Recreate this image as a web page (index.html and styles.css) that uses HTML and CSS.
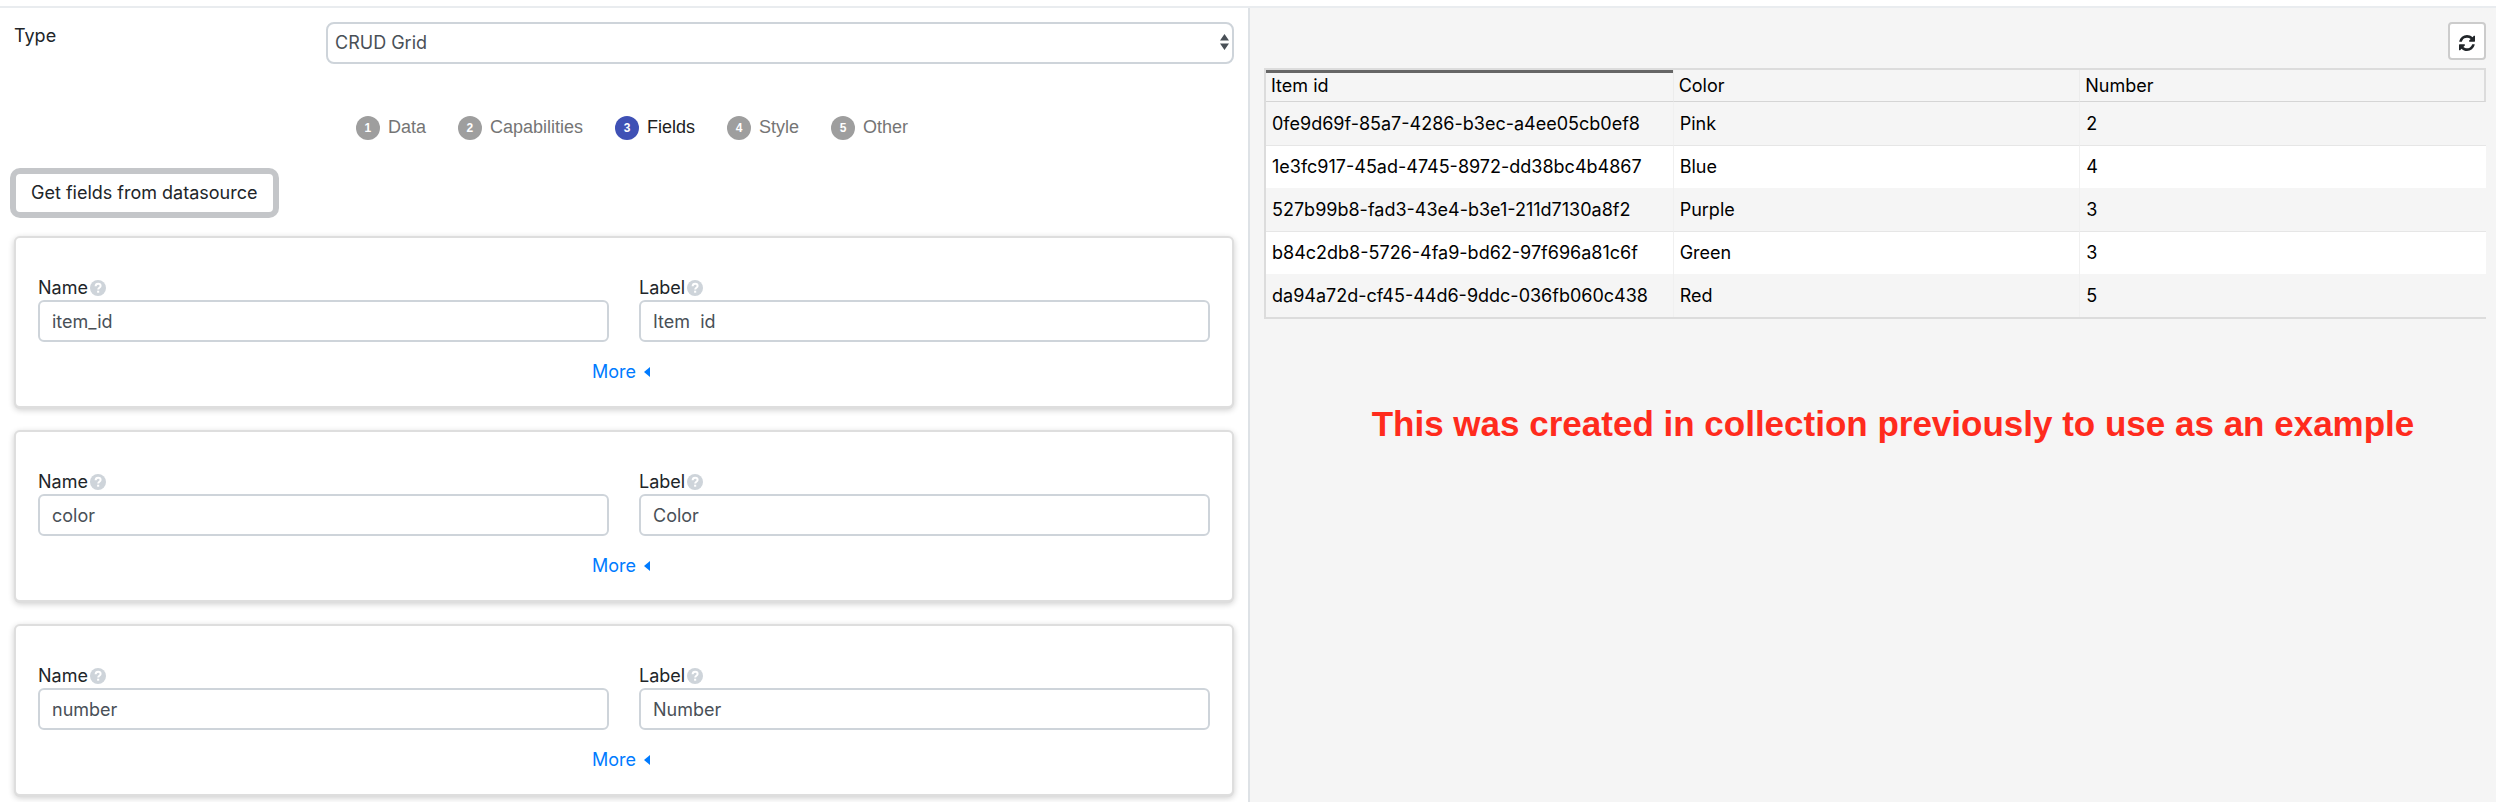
FILE: index.html
```html
<!DOCTYPE html>
<html lang="en">
<head>
<meta charset="utf-8">
<title>CRUD Grid settings</title>
<link rel="stylesheet" href="styles.css">
</head>
<body>
<svg class="defs" aria-hidden="true">
  <symbol id="help" viewBox="0 0 16 16"><circle cx="8" cy="8" r="8" fill="#ced4da"/><path d="M5.600 6.200C5.700 4.500 6.700 3.700 8.100 3.700c1.500 0 2.500.900 2.500 2.200 0 1.800-2.400 1.800-2.400 3.500" fill="none" stroke="#fff" stroke-width="2"/><path d="M7.100 10.700h2.100v2h-2.100z" fill="#fff"/></symbol>
</svg>
<div class="app">
  <main class="editor">
    <div class="type-row">
      <label class="type-label" for="type">Type</label>
      <div class="select-wrap">
        <select id="type" class="control select"><option>CRUD Grid</option></select>
        <svg class="select-arrow" viewBox="0 0 9 16" aria-hidden="true"><path d="M0 6.500 4.500 0 9 6.500zM0 9.500 4.500 16 9 9.500z" fill="#495057"/></svg>
      </div>
    </div>
    <nav class="steps">
      <button class="step"><span class="dot">1</span>Data</button>
      <button class="step"><span class="dot">2</span>Capabilities</button>
      <button class="step active"><span class="dot">3</span>Fields</button>
      <button class="step"><span class="dot">4</span>Style</button>
      <button class="step"><span class="dot">5</span>Other</button>
    </nav>
    <button class="fetch">Get fields from datasource</button>
    <div class="cards">
      <section class="card">
        <div class="fields">
          <div><label class="field-label" for="n1">Name<svg class="help"><use href="#help"/></svg></label><input class="control" id="n1" type="text" value="item_id"></div>
          <div><label class="field-label" for="l1">Label<svg class="help"><use href="#help"/></svg></label><input class="control" id="l1" type="text" value="Item  id"></div>
        </div>
        <a class="more" href="#">More<svg class="caret" viewBox="0 0 6 10"><path d="M6 0v10L0 5z" fill="currentColor"/></svg></a>
      </section>
      <section class="card">
        <div class="fields">
          <div><label class="field-label" for="n2">Name<svg class="help"><use href="#help"/></svg></label><input class="control" id="n2" type="text" value="color"></div>
          <div><label class="field-label" for="l2">Label<svg class="help"><use href="#help"/></svg></label><input class="control" id="l2" type="text" value="Color"></div>
        </div>
        <a class="more" href="#">More<svg class="caret" viewBox="0 0 6 10"><path d="M6 0v10L0 5z" fill="currentColor"/></svg></a>
      </section>
      <section class="card">
        <div class="fields">
          <div><label class="field-label" for="n3">Name<svg class="help"><use href="#help"/></svg></label><input class="control" id="n3" type="text" value="number"></div>
          <div><label class="field-label" for="l3">Label<svg class="help"><use href="#help"/></svg></label><input class="control" id="l3" type="text" value="Number"></div>
        </div>
        <a class="more" href="#">More<svg class="caret" viewBox="0 0 6 10"><path d="M6 0v10L0 5z" fill="currentColor"/></svg></a>
      </section>
    </div>
  </main>
  <aside class="preview">
    <button class="refresh" aria-label="Refresh"><svg viewBox="0 0 1536 1536"><path fill="#212529" d="M1511 928q0 5-1 7-64 268-268 434.500T764 1536q-146 0-282.500-55T238 1324l-129 129q-19 19-45 19t-45-19-19-45V960q0-26 19-45t45-19h448q26 0 45 19t19 45-19 45l-137 137q71 66 161 102t187 36q134 0 250-65t186-179q11-17 53-117 8-23 30-23h192q13 0 22.500 9.500t9.500 22.500zm25-800v448q0 26-19 45t-45 19h-448q-26 0-45-19t-19-45 19-45l138-138Q969 256 768 256q-134 0-250 65T332 500q-11 17-53 117-8 23-30 23H50q-13 0-22.500-9.500T18 608v-7q65-268 270-434.500T768 0q146 0 284 55.500T1297 212l130-129q19-19 45-19t45 19 19 45z"/></svg></button>
    <table class="grid">
      <thead><tr><th class="sorted">Item id</th><th>Color</th><th>Number</th></tr></thead>
      <tbody>
        <tr><td>0fe9d69f-85a7-4286-b3ec-a4ee05cb0ef8</td><td>Pink</td><td>2</td></tr>
        <tr><td>1e3fc917-45ad-4745-8972-dd38bc4b4867</td><td>Blue</td><td>4</td></tr>
        <tr><td>527b99b8-fad3-43e4-b3e1-211d7130a8f2</td><td>Purple</td><td>3</td></tr>
        <tr><td>b84c2db8-5726-4fa9-bd62-97f696a81c6f</td><td>Green</td><td>3</td></tr>
        <tr><td>da94a72d-cf45-44d6-9ddc-036fb060c438</td><td>Red</td><td>5</td></tr>
      </tbody>
    </table>
    <p class="note">This was created in collection previously to use as an example</p>
  </aside>
</div>
</body>
</html>
```
FILE: styles.css
```css
* { box-sizing: border-box; }
body { margin: 0; padding-top: 6px; background: #fff; color: #212529; font: 18px/24px Inter, "Liberation Sans", sans-serif; }
button, input, select { font: inherit; color: inherit; margin: 0; }
.defs { position: absolute; width: 0; height: 0; }
.app { display: grid; grid-template-columns: 1fr 1fr; min-height: calc(100vh - 6px); border-top: 2px solid #e9ecef; }
.editor { padding: 14px 14px 0; }
.type-row { display: flex; align-items: flex-start; justify-content: space-between; }
.type-label { padding-top: 2px; }
.select-wrap { position: relative; width: 908px; max-width: 75%; }
.control { display: block; width: 100%; height: 42px; padding: 0 12px; border: 2px solid #ced4da; border-radius: 6px; background: #fff; color: #495057; }
.select { appearance: none; padding: 0 7px; border-radius: 8px; }
.select-arrow { position: absolute; right: 5px; top: 12px; width: 9px; height: 16px; }
.steps { display: flex; justify-content: center; gap: 32px; margin: 52px 0 32px; padding-left: 16px; }
.step { display: flex; align-items: flex-start; gap: 8px; padding: 0; border: 0; background: none; color: #757575; font: 18px/22px "Liberation Sans", sans-serif; }
.dot { display: grid; place-items: center; width: 24px; height: 24px; border-radius: 50%; background: #9e9e9e; color: #fff; font-size: 12px; font-weight: 700; }
.active { color: #212121; }
.active .dot { background: #3f51b5; }
.fetch { display: block; height: 42px; padding: 0 15px; border: 2px solid #c4c6c9; border-radius: 6px; background: #fff; box-shadow: 0 0 0 4px #c4c6c9; }
.cards { display: grid; gap: 26px; margin-top: 24px; padding: 0 2px 8px; }
.card { display: flex; flex-direction: column; padding: 38px 22px 22px; border-radius: 4px; background: #fff; box-shadow: 0 0 0 2px #dedede, 0 1px 0 2px #dedede, 0 2px 6px 2px #0003; }
.fields { display: grid; grid-template-columns: 1fr 1fr; gap: 30px; }
.field-label { display: flex; align-items: center; }
.help { width: 16px; height: 16px; margin-left: 2px; }
.more { display: flex; align-items: center; justify-content: center; gap: 8px; margin-top: 18px; padding-right: 6px; color: #007bff; text-decoration: none; }
.caret { width: 6px; height: 10px; }
.preview { display: flex; flex-direction: column; padding: 14px 10px 0 14px; border-left: 2px solid #dee2e6; background: #f5f5f5; }
.refresh { display: grid; place-items: center; align-self: flex-end; width: 38px; height: 38px; padding: 3px 0 0; border: 2px solid #ccc; border-radius: 4px; background: #fff; }
.refresh svg { width: 16px; height: 16px; }
.grid { width: 100%; margin-top: 8px; table-layout: fixed; border-collapse: separate; border-spacing: 0; border: solid #dcdcdc; border-width: 2px 0 2px 2px; color: #000; }
.grid th { height: 32px; padding: 0 5px; border-bottom: 1px solid #d5d5d5; border-left: 1px solid #ececec; text-align: left; font-weight: 400; }
.grid th:last-child { border-right: 2px solid #dcdcdc; }
.grid .sorted { border-left: 0; box-shadow: inset 0 3px #666; }
.grid td { height: 43px; padding: 0 6px; border-left: 1px solid #f0f0f0; white-space: nowrap; }
.grid td:first-child { border-left: 0; }
.grid tbody tr:nth-child(even) { background: #fff; }
.grid tbody tr:nth-child(even) td { border-top: 1px solid #e6e6e6; }
.note { margin: 85px 0 0; padding-left: 36px; text-align: center; color: #ff2b1d; font: 700 35px/40px "Liberation Sans", sans-serif; }
```
